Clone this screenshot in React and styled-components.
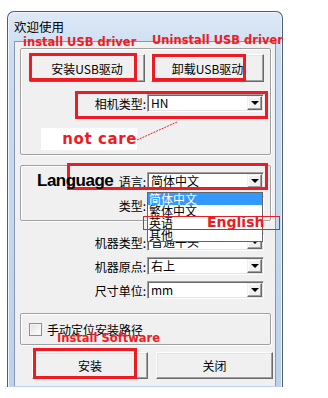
import styled, { createGlobalStyle } from 'styled-components';

const GlobalStyle = createGlobalStyle`
  html, body {
    margin: 0;
    padding: 0;
    background: #ffffff;
  }
  body {
    font-family: "Noto Sans CJK SC", "Liberation Sans", sans-serif;
    color: #000;
  }
`;

const Page = styled.div`
  position: relative;
  width: 328px;
  height: 398px;
  box-sizing: border-box;
  padding: 11px 0 0 7px;
  overflow: hidden;
`;

const Window = styled.div`
  width: 276px;
  height: 376px;
  box-sizing: border-box;
  border: 1px solid #4f5f73;
  border-bottom: none;
  border-radius: 7px 7px 0 0;
  padding: 0 6px;
  background: linear-gradient(180deg, #dde9f7 0%, #cadcf1 12%, #c3d7ee 60%, #bcd2ec 100%);
  box-shadow: inset 1px 1px 0 #eef5fd, inset -1px 0 0 #eef5fd;
  display: flex;
  flex-direction: column;
`;

const TitleBar = styled.div`
  height: 29px;
  display: flex;
  align-items: center;
  padding-bottom: 1px;
  box-sizing: border-box;
  font-size: 12.5px;
  color: #000;
`;

const Client = styled.div`
  height: 345px;
  box-sizing: border-box;
  border: 1px solid #8599b2;
  border-bottom: none;
  background: #f0f0f0;
  padding: 6px 0 0 5px;
  display: flex;
  flex-direction: column;
`;

const Group = styled.div`
  width: 251px;
  height: ${p => p.$h}px;
  margin-top: ${p => p.$mt || 0}px;
  box-sizing: border-box;
  border: 1px solid #a0a0a0;
  border-radius: 2px;
  box-shadow: inset 1px 1px 0 #ffffff, 1px 1px 0 #ffffff;
  padding: ${p => p.$pad};
  display: flex;
  flex-direction: column;
  gap: ${p => p.$gap || 0}px;
`;

const ButtonRow = styled.div`
  display: flex;
  gap: ${p => p.$gap}px;
  margin-top: ${p => p.$mt || 0}px;
  padding-left: ${p => p.$pl || 0}px;
`;

const Button = styled.div`
  width: ${p => p.$w}px;
  height: ${p => p.$h}px;
  box-sizing: border-box;
  display: flex;
  align-items: center;
  justify-content: center;
  font-size: 12px;
  background: #f0f0f0;
  border: 1px solid;
  border-color: #ffffff #696969 #696969 #ffffff;
  box-shadow: inset -1px -1px 0 #a0a0a0, inset 1px 1px 0 #e3e3e3;
`;

const FieldStack = styled.div`
  display: flex;
  flex-direction: column;
  gap: 6px;
  margin-top: ${p => p.$mt || 0}px;
  padding-right: ${p => p.$pr}px;
`;

const FieldRow = styled.div`
  display: flex;
  justify-content: flex-end;
  align-items: center;
  height: 18px;
`;

const Label = styled.span`
  font-size: 12px;
  margin-right: 1px;
  white-space: nowrap;
`;

const Select = styled.div`
  width: 117px;
  height: 18px;
  box-sizing: border-box;
  background: #ffffff;
  border: 1px solid;
  border-color: #a0a0a0 #ffffff #ffffff #a0a0a0;
  box-shadow: inset 1px 1px 0 #696969, inset -1px -1px 0 #e3e3e3;
  display: flex;
  align-items: center;
  padding: 0 1px 0 3px;
  font-size: 12px;
`;

const SelectText = styled.span`
  flex: 1;
  white-space: nowrap;
  line-height: 14px;
`;

const ArrowButton = styled.div`
  width: 15px;
  height: 14px;
  flex: none;
  box-sizing: border-box;
  background: #f0f0f0;
  border: 1px solid;
  border-color: #f0f0f0 #696969 #696969 #f0f0f0;
  box-shadow: inset -1px -1px 0 #a0a0a0, inset 1px 1px 0 #ffffff;
  display: flex;
  align-items: center;
  justify-content: center;
  &::after {
    content: "";
    border-left: 4px solid transparent;
    border-right: 4px solid transparent;
    border-top: 4px solid #000;
  }
`;

const CheckGroup = styled(Group)`
  flex-direction: row;
  align-items: center;
`;

const CheckBox = styled.div`
  width: 13px;
  height: 13px;
  box-sizing: border-box;
  border: 1px solid #8e8f8f;
  background: linear-gradient(135deg, #dcdcdc 0%, #f4f4f4 60%, #ffffff 100%);
  box-shadow: inset 0 0 0 1px #f5f5f5;
  margin-right: 5px;
`;

/* annotation overlays drawn on top of the screenshot */
const Mark = styled.div`
  position: absolute;
  left: ${p => p.$x}px;
  top: ${p => p.$y}px;
  width: ${p => p.$w}px;
  height: ${p => p.$h}px;
  box-sizing: border-box;
  border: ${p => p.$b || 3}px solid #ed1c24;
  pointer-events: none;
`;

const Note = styled.div`
  position: absolute;
  left: ${p => p.$x}px;
  top: ${p => p.$y}px;
  font-family: ${p => p.$family || '"DejaVu Sans", "Liberation Sans", sans-serif'};
  font-weight: bold;
  font-size: ${p => p.$size}px;
  letter-spacing: ${p => p.$ls || 0}px;
  color: ${p => p.$color || '#ed1c24'};
  white-space: nowrap;
  line-height: 1;
`;

const NotCare = styled.div`
  position: absolute;
  left: 41px;
  top: 128px;
  width: 96px;
  height: 22px;
  background: #ffffff;
  display: flex;
  align-items: center;
  justify-content: flex-end;
  font-family: "DejaVu Sans", "Liberation Sans", sans-serif;
  font-weight: bold;
  font-size: 15px;
  letter-spacing: 0.6px;
  color: #ed1c24;
`;

const Pointer = styled.svg`
  position: absolute;
  left: 0;
  top: 0;
  pointer-events: none;
`;

const DropList = styled.div`
  position: absolute;
  left: 147px;
  top: 192px;
  width: 116px;
  height: 50px;
  box-sizing: border-box;
  border: 1px solid #646464;
  background: #ffffff;
  display: flex;
  flex-direction: column;
`;

const DropItem = styled.div`
  height: 12px;
  line-height: 12px;
  font-size: 12px;
  padding-left: 1px;
  background: ${p => (p.$active ? '#3399ff' : 'transparent')};
  color: ${p => (p.$active ? '#ffffff' : '#000000')};
  white-space: nowrap;
`;

function Combo({ label, value }) {
  return (
    <FieldRow>
      <Label>{label}</Label>
      <Select>
        <SelectText>{value}</SelectText>
        <ArrowButton />
      </Select>
    </FieldRow>
  );
}

export default function App() {
  const langs = ['简体中文', '繁体中文', '英语', '其他'];
  return (
    <Page>
      <GlobalStyle />
      <Window>
        <TitleBar>欢迎使用</TitleBar>
        <Client>
          <Group $h={107} $pad="5px 0 0 8px">
            <ButtonRow $gap={6}>
              <Button $w={116} $h={28}>安装USB驱动</Button>
              <Button $w={113} $h={28}>卸载USB驱动</Button>
            </ButtonRow>
            <FieldStack $mt={12} $pr={6}>
              <Combo label="相机类型:" value="HN" />
            </FieldStack>
          </Group>

          <Group $h={56} $mt={10} $pad="6px 6px 0 0" $gap={6}>
            <Combo label="语言:" value="简体中文" />
            <Combo label="类型:" value="" />
          </Group>

          <FieldStack $mt={12} $pr={11}>
            <Combo label="机器类型:" value="普通平头" />
            <Combo label="机器原点:" value="右上" />
            <Combo label="尺寸单位:" value="mm" />
          </FieldStack>

          <CheckGroup $h={32} $mt={14} $pad="0 0 0 8px">
            <CheckBox />
            <Label>手动定位安装路径</Label>
          </CheckGroup>

          <ButtonRow $gap={8} $mt={7} $pl={12}>
            <Button $w={116} $h={27}>安装</Button>
            <Button $w={117} $h={27}>关闭</Button>
          </ButtonRow>
        </Client>
      </Window>

      <DropList>
        {langs.map((l, i) => (
          <DropItem key={l} $active={i === 0}>{l}</DropItem>
        ))}
      </DropList>

      <Mark $x={29} $y={53} $w={108} $h={28} />
      <Mark $x={152} $y={54} $w={94} $h={27} />
      <Mark $x={75} $y={91} $w={193} $h={28} />
      <Mark $x={67} $y={163} $w={201} $h={27} />
      <Mark $x={33} $y={348} $w={104} $h={31} />
      <Mark $x={143} $y={216} $w={137} $h={14} $b={1} />

      <Note $x={23} $y={37} $size={11.5}>install USB driver</Note>
      <Note $x={152} $y={35} $size={11.5}>Uninstall USB driver</Note>
      <Note $x={57} $y={333} $size={11.5}>Install Software</Note>
      <Note $x={207} $y={215} $size={14}>English</Note>
      <Note $x={37} $y={172} $size={17} $ls={-0.5} $color="#000" $family='"Liberation Sans", Arial, sans-serif'>Language</Note>

      <NotCare>not care</NotCare>
      <Pointer width="328" height="398">
        <line x1="137" y1="140" x2="177" y2="122" stroke="#ed1c24" strokeWidth="1" strokeDasharray="2 1" />
      </Pointer>
    </Page>
  );
}
